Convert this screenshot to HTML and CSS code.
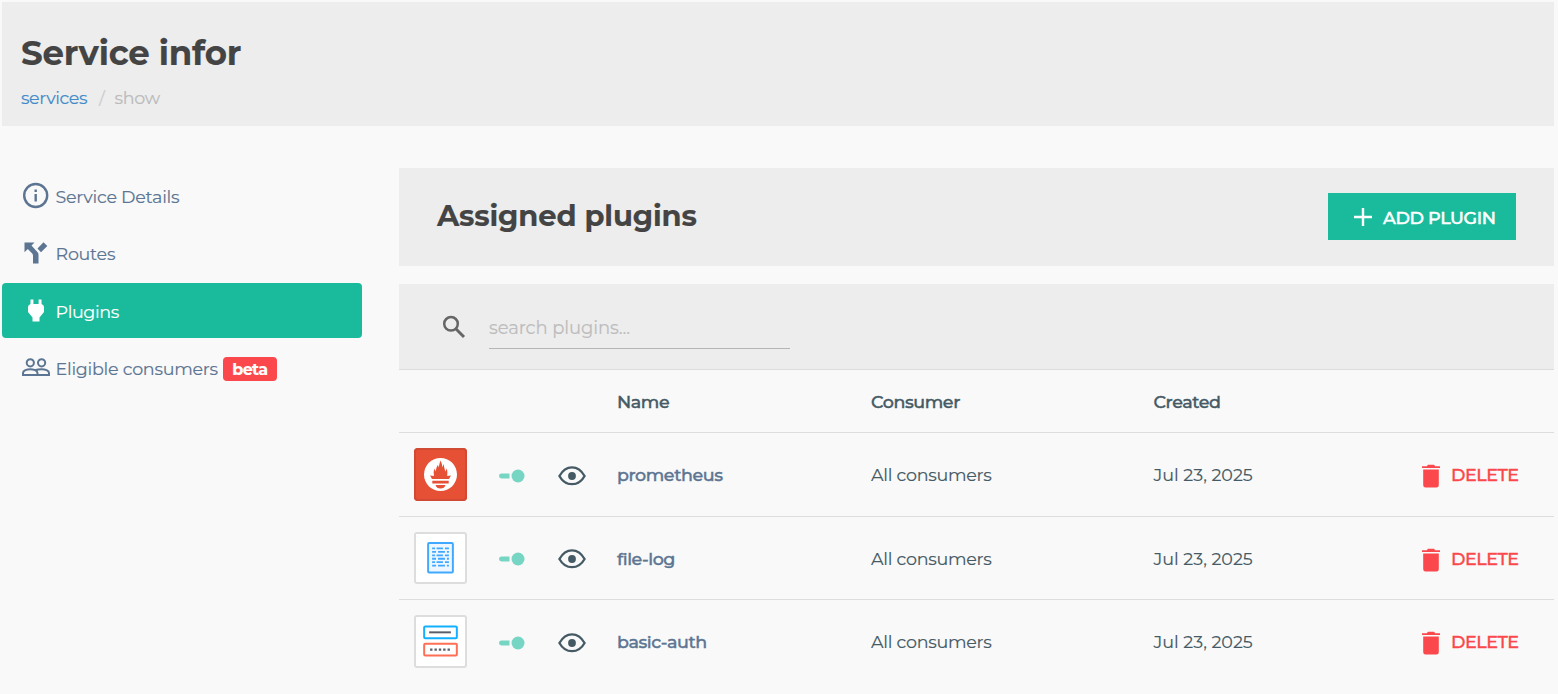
FILE: index.html
```html
<!DOCTYPE html>
<html lang="en">
<head>
<meta charset="utf-8">
<title>Service infor</title>
<link rel="stylesheet" href="styles.css">
</head>
<body>
<svg class="defs" aria-hidden="true">
  <symbol id="eye" viewBox="0 0 28 20">
    <path d="M1.4 10C4.2 5 8.600 1.300 14 1.300S23.800 5 26.600 10C23.800 15 19.400 18.200 14 18.200S4.200 15 1.400 10z" fill="none" stroke="currentColor" stroke-width="2.300"/>
    <circle cx="14" cy="10" r="3.900" fill="currentColor"/>
  </symbol>
  <symbol id="toggle" viewBox="0 0 26 14">
    <path d="M2.500 4.500H10.500V9.500H2.500A2.500 2.500 0 0 1 2.500 4.500z" fill="currentColor"/>
    <circle cx="19" cy="7" r="6.500" fill="currentColor"/>
  </symbol>
  <symbol id="trash" viewBox="0 0 18 24">
    <path d="M0 2.200H4.800L6 .8H12L13.200 2.200H18V4H0zM1.200 5.500H16.800V21Q16.800 23.500 14.500 23.500H3.500Q1.200 23.500 1.200 21z" fill="currentColor"/>
  </symbol>
</svg>

<header class="page-header">
  <h1 class="page-title">Service infor</h1>
  <nav class="crumbs"><a class="crumb-link">services</a><span class="crumb-sep">/</span><span class="crumb-current">show</span></nav>
</header>

<div class="layout">
  <nav class="sidebar">
    <a class="side-item"><svg class="side-icon" viewBox="0 0 28 28"><circle cx="13.700" cy="13.500" r="11.500" fill="none" stroke="currentColor" stroke-width="2.400"/><path d="M12.500 7.500h2.400v2.400h-2.400zM12.500 12h2.400v7.500h-2.400z" fill="currentColor"/></svg><span>Service Details</span></a>
    <a class="side-item"><svg class="side-icon" viewBox="0 0 28 28"><path d="M2.500 3.500H12.500L9.500 6.500L14 11.500Q16.500 13.500 16.500 16V24.500H11V16.500Q11 15.500 10.200 14.600L5.800 10L2.500 13.200zM15.500 9.500L21.500 3.200L25.300 7L19 13.200z" fill="currentColor"/></svg><span>Routes</span></a>
    <a class="side-item active"><svg class="side-icon" viewBox="0 0 28 28"><path d="M8.500 2.500h2.900v4.500h5.200V2.500h2.900v4.500q2.500 1 2.500 3v5l-4.500 5.500V24.500H10.500V20.500L6 15v-5q0-2 2.500-3z" fill="currentColor"/></svg><span>Plugins</span></a>
    <a class="side-item"><svg class="side-icon" viewBox="0 0 28 28"><g fill="none" stroke="currentColor" stroke-width="2"><circle cx="8.300" cy="8.800" r="3.600"/><circle cx="19.600" cy="8.800" r="3.600"/><path d="M1 21V19C1 16.500 5 15.200 8.200 15.200S15.500 16.500 15.500 19V21zM13 16.300C15 15.500 17.500 15.200 19.600 15.200C23 15.200 27 16.500 27 19V21H15.500"/></g></svg><span>Eligible consumers</span><span class="badge">beta</span></a>
  </nav>

  <main class="content">
    <section class="panel-head">
      <h2 class="panel-title">Assigned plugins</h2>
      <button class="add-button"><svg class="plus" viewBox="0 0 18 18"><path d="M9 0V18M0 9H18" stroke="currentColor" stroke-width="2.400"/></svg><span>ADD PLUGIN</span></button>
    </section>

    <section class="search-bar">
      <svg class="search-icon" viewBox="0 0 24 24"><circle cx="9" cy="8.800" r="6.800" fill="none" stroke="currentColor" stroke-width="2.500"/><path d="M13.800 13.800L22 22" stroke="currentColor" stroke-width="3"/></svg>
      <input class="search-input" type="text" placeholder="search plugins...">
    </section>

    <div class="row head-row"><span class="col-name">Name</span><span class="col-consumer">Consumer</span><span class="col-created">Created</span></div>

    <div class="row">
      <span class="logo logo-red"><svg width="53" height="53" viewBox="0 0 53 53"><circle cx="26.500" cy="26.500" r="16.500" fill="#fff"/><path d="M20 28Q18.800 24.500 20.500 20.500L21.800 23.500Q22.300 18.500 24 17L24.800 19.500Q25.300 15.500 26.500 12.500Q28 15 28.300 19.500L29.500 16Q30.300 20 31.300 23.500L32.800 20.500Q34 24.500 33.200 28L37 27.500L35 31H18L16 27.500zM18.300 32.800H34.700V35.500H18.300zM21.500 37H31.500Q30.500 40.500 26.500 40.500T21.500 37z" fill="#e65035"/></svg></span>
      <svg class="toggle"><use href="#toggle"/></svg>
      <svg class="eye"><use href="#eye"/></svg>
      <a class="col-name link">prometheus</a><span class="col-consumer">All consumers</span><span class="col-created date">Jul 23, 2025</span>
      <a class="delete"><svg class="trash"><use href="#trash"/></svg><span>DELETE</span></a>
    </div>

    <div class="row row-log">
      <span class="logo"><svg width="49" height="49" viewBox="0 0 49 49"><rect x="12" y="9" width="25" height="30" rx="1" fill="#eef7ff" stroke="#40a9ff" stroke-width="2"/><g fill="none" stroke="#40a9ff" stroke-width="1.800"><path d="M16 14.500h3M20.500 14.500h6.500M29 14.500h4M16 21.500h3M20.500 21.500h6.500M29 21.500h4M16 28.500h3M20.500 28.500h6.500M29 28.500h4"/><path d="M16 18h4M22 18h7M31 18h2M16 25h4M22 25h7M31 25h2M16 32h4M22 32h7M31 32h2"/></g></svg></span>
      <svg class="toggle"><use href="#toggle"/></svg>
      <svg class="eye"><use href="#eye"/></svg>
      <a class="col-name link link-log">file-log</a><span class="col-consumer">All consumers</span><span class="col-created date">Jul 23, 2025</span>
      <a class="delete"><svg class="trash"><use href="#trash"/></svg><span>DELETE</span></a>
    </div>

    <div class="row">
      <span class="logo"><svg width="49" height="49" viewBox="0 0 49 49"><rect x="8" y="9.500" width="33" height="12" rx="1" fill="none" stroke="#12b0ff" stroke-width="2"/><path d="M13 15.500H35" stroke="#5a6068" stroke-width="2"/><rect x="8" y="27" width="33" height="12" rx="1" fill="none" stroke="#ff6f56" stroke-width="2"/><path d="M14 33H35" stroke="#5a6068" stroke-width="2.400" stroke-dasharray="2.400 2"/></svg></span>
      <svg class="toggle"><use href="#toggle"/></svg>
      <svg class="eye"><use href="#eye"/></svg>
      <a class="col-name link">basic-auth</a><span class="col-consumer">All consumers</span><span class="col-created date">Jul 23, 2025</span>
      <a class="delete"><svg class="trash"><use href="#trash"/></svg><span>DELETE</span></a>
    </div>
  </main>
</div>
</body>
</html>
```

FILE: styles.css
```css
* { box-sizing: border-box; }
body {
  margin: 0;
  padding: 2px 4px 0 2px;
  height: 694px;
  overflow: hidden;
  background: #f9f9f9;
  color: #455a64;
  font-family: Montserrat, Inter, sans-serif;
  font-size: 17.5px;
  line-height: 24px;
  letter-spacing: -.26px;
  -webkit-text-stroke: .15px currentColor;
}
.defs { display: none; }
svg { display: block; flex: none; }
h1, h2 { margin: 0; color: #444; font-weight: 700; }
span, a { white-space: nowrap; }

.page-header { height: 124px; padding: 28px 19px 0; background: #ededed; }
.page-title { font-size: 34px; line-height: 46px; letter-spacing: -.25px; }
.crumbs { display: flex; margin-top: 10px; }
.crumb-link { width: 78px; color: #428bca; letter-spacing: -.42px; }
.crumb-sep { width: 15.500px; color: #ccc; }
.crumb-current { color: #bbb; }

.layout { display: flex; gap: 37px; margin-top: 42px; }
.sidebar { display: flex; flex-direction: column; gap: 2.500px; width: 360px; }
.side-item {
  display: flex;
  align-items: center;
  height: 55px;
  padding: 2px 0 0 20px;
  border-radius: 4px;
  color: #5c7592;
}
.side-icon { width: 28px; height: 28px; margin: -2px 5.500px 0 0; }
.side-item.active { background: #1abb9c; color: #fff; letter-spacing: -.4px; }
.badge {
  margin-left: 5px;
  width: 54px;
  height: 24px;
  border-radius: 4px;
  background: #fa484c;
  color: #fff;
  font-size: 16px;
  font-weight: 700;
  line-height: 25px;
  text-align: center;
  letter-spacing: -.6px;
}

.content { width: 1155px; }
.panel-head {
  display: flex;
  align-items: flex-start;
  justify-content: space-between;
  height: 98px;
  padding: 25px 38px 0;
  background: #ededed;
}
.panel-title { margin-top: 3px; font-size: 29px; line-height: 40px; letter-spacing: -.13px; }
.add-button {
  display: flex;
  align-items: center;
  width: 188px;
  height: 47px;
  padding: 3px 0 0 26px;
  border: 0;
  background: #1abb9c;
  color: #fff;
  font: 500 17.500px/24px Montserrat, Inter, sans-serif;
  letter-spacing: -.34px;
  -webkit-text-stroke: .5px currentColor;
}
.plus { width: 18px; height: 18px; margin: -3px 11px 0 0; }

.search-bar {
  display: flex;
  height: 86px;
  margin-top: 18px;
  padding: 24px 43px 0;
  border-bottom: 1px solid #ddd;
  background: #ededed;
}
.search-icon { width: 24px; height: 24px; margin: 7px 23px 0 0; color: #666; }
.search-input {
  width: 301px;
  height: 41px;
  padding: 0;
  border: 0;
  border-bottom: 1px solid #b5b5b5;
  background: none;
  outline: 0;
  font: 18px/24px Montserrat, Inter, sans-serif;
  letter-spacing: -.1px;
}
.search-input::placeholder { color: #bdbdbd; opacity: 1; }

.row {
  display: grid;
  grid-template-columns: 85px 59px 59px 254px 282.500px 268.500px 1fr;
  align-items: center;
  height: 83.500px;
  padding-left: 15px;
  border-bottom: 1px solid #ddd;
}
.row:last-child { border-bottom: 0; height: 82.500px; }
.col-name, .col-consumer, .col-created, .delete { padding-top: 1px; }
.row-log .col-name, .row-log .col-consumer, .row-log .col-created, .row-log .delete { padding-top: 2px; }
.row-log .trash { margin-top: 2px; }
.head-row { height: 63px; font-weight: 500; letter-spacing: -.4px; -webkit-text-stroke: .4px currentColor; }
.head-row span { padding-top: 2px; }
.col-name { grid-column: 4; }
.col-consumer { grid-column: 5; }
.col-created { grid-column: 6; }
.date { letter-spacing: 0; }
.link { color: #5c7592; font-weight: 500; letter-spacing: -.42px; -webkit-text-stroke: .4px currentColor; }
.link-log { letter-spacing: -.45px; }
.logo { width: 53px; height: 52.500px; border: 2px solid #ddd; border-radius: 3px; background: #fff; }
.logo svg { height: 48.500px; }
.logo-red { border: 0; border-radius: 4px; background: #e65035; box-shadow: inset 0 0 0 2px #d04a34; }
.logo-red svg { height: 53px; }
.toggle { width: 26px; height: 14px; margin-top: 3px; color: #76d5c3; }
.eye { width: 28px; height: 20px; margin-top: 3px; color: #455a64; }
.delete { display: flex; align-items: center; gap: 11px; color: #fa484c; font-weight: 500; letter-spacing: -.45px; -webkit-text-stroke: .35px currentColor; }
.trash { width: 18px; height: 24px; margin-top: 3px; }
```
